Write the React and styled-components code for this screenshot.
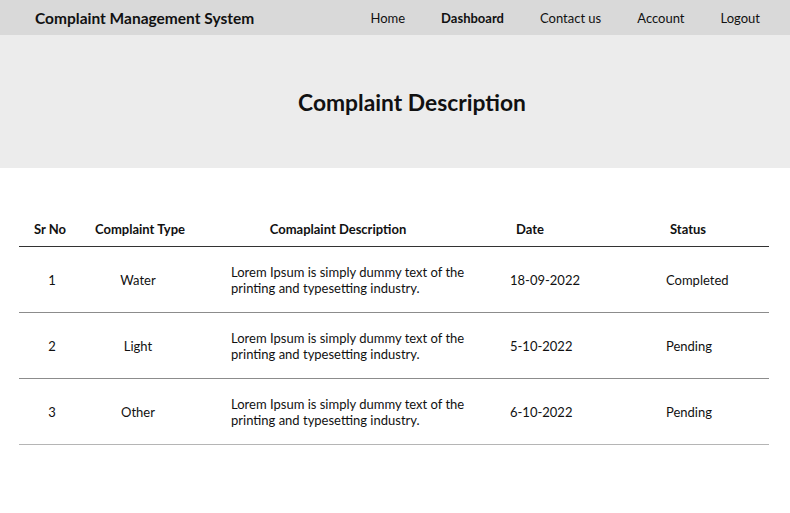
import React from 'react'
import styled, { createGlobalStyle } from "styled-components";

const Global = createGlobalStyle`
    body {
        margin: 0;
        background: #ffffff;
        font-family: "Lato", "Open Sans", sans-serif;
        color: #111111;
    }
`;

const Nav = styled.nav`
    height: 35px;
    background: #d9d9d9;
    display: flex;
    align-items: center;
    justify-content: space-between;
    padding: 0 30px 0 35px;
`;

const Brand = styled.div`
    font-size: 15.5px;
    font-weight: 700;
    color: #111;
`;

const Links = styled.div`
    display: flex;
    gap: 36px;
`;

const Link = styled.a`
    font-size: 13px;
    color: #111;
    text-decoration: none;
    font-weight: ${p => (p.$active ? 700 : 400)};
`;

const Hero = styled.div`
    height: 133px;
    background: #ececec;
    display: flex;
    align-items: center;
    justify-content: center;
`;

const Title = styled.h1`
    margin: 0 0 0 34px;
    font-size: 22.8px;
    font-weight: 700;
    color: #111;
`;

const Table = styled.div`
    margin: 35px 21px 0 19px;
`;

const Row = styled.div`
    display: grid;
    grid-template-columns: 62px 118px 278px 106px 186px;
    align-items: ${p => (p.$head ? "end" : "center")};
    height: ${p => (p.$head ? "44px" : "66px")};
    padding-bottom: ${p => (p.$head ? "9px" : "0")};
    box-sizing: border-box;
    border-bottom: 1px solid ${p => p.$line};
    font-size: 13px;
    font-weight: ${p => (p.$head ? 700 : 400)};
`;

const Cell = styled.div`
    text-align: ${p => p.$align || "center"};
    padding-left: ${p => p.$pad || 0}px;
    padding-right: ${p => p.$padR || 0}px;
    line-height: 16px;
`;

const rows = [
    { no: 1, type: "Water", date: "18-09-2022", status: "Completed" },
    { no: 2, type: "Light", date: "5-10-2022", status: "Pending" },
    { no: 3, type: "Other", date: "6-10-2022", status: "Pending" },
];

export default function App() {
    return (
        <>
            <Global />
            <Nav>
                <Brand>Complaint Management System</Brand>
                <Links>
                    <Link>Home</Link>
                    <Link $active>Dashboard</Link>
                    <Link>Contact us</Link>
                    <Link>Account</Link>
                    <Link>Logout</Link>
                </Links>
            </Nav>
            <Hero>
                <Title>Complaint Description</Title>
            </Hero>
            <Table>
                <Row $head $line="#333">
                    <Cell>Sr No</Cell>
                    <Cell>Complaint Type</Cell>
                    <Cell>Comaplaint Description</Cell>
                    <Cell>Date</Cell>
                    <Cell $pad={24}>Status</Cell>
                </Row>
                {rows.map((r, i) => (
                    <Row key={r.no} $line={i === rows.length - 1 ? "#b5b5b5" : "#8c8c8c"}>
                        <Cell $pad={4}>{r.no}</Cell>
                        <Cell $padR={4}>{r.type}</Cell>
                        <Cell $align="left" $pad={32}>Lorem Ipsum is simply dummy text of the printing and typesetting industry.</Cell>
                        <Cell $align="left" $pad={33}>{r.date}</Cell>
                        <Cell $align="left" $pad={83}>{r.status}</Cell>
                    </Row>
                ))}
            </Table>
        </>
    )
}
